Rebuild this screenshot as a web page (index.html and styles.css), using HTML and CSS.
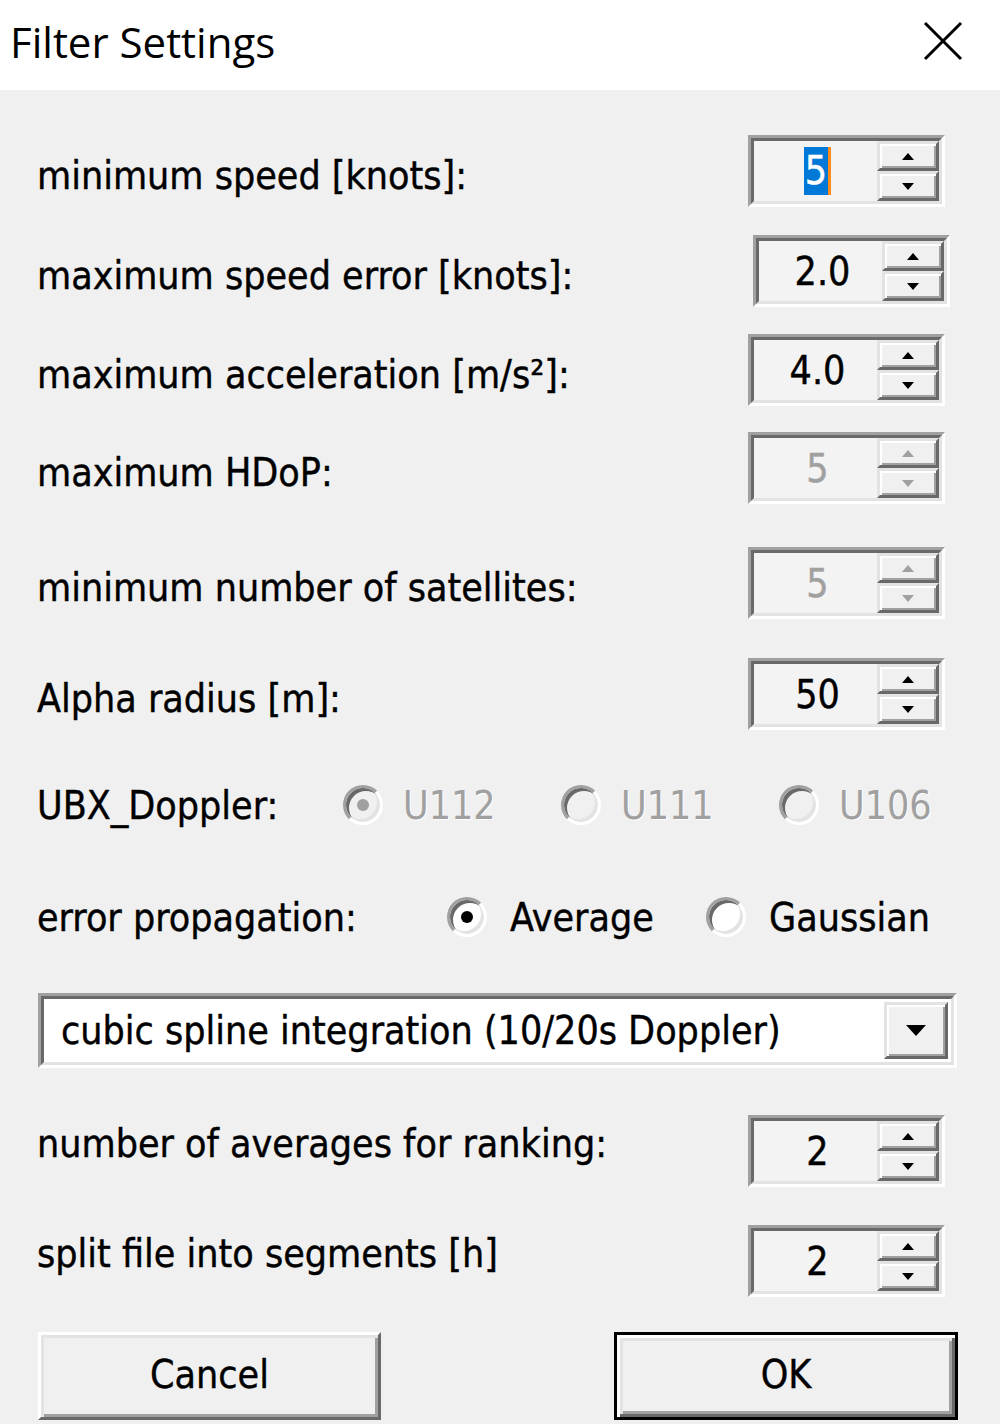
FILE: index.html
```html
<!DOCTYPE html>
<html>
<head>
<meta charset="utf-8">
<title>Filter Settings</title>
<link rel="stylesheet" href="styles.css">
</head>
<body>
<div class="dialog">
  <div class="titlebar">
    <span class="title">Filter Settings</span>
    <svg class="close" width="40" height="40" viewBox="0 0 40 40"><path d="M2 2 L38 38 M38 2 L2 38" stroke="#000" stroke-width="3" fill="none"/></svg>
  </div>
  <div class="content">
    <div class="row r1">
      <span class="label">minimum speed [knots]:</span>
      <div class="spin"><div class="spin-in">
        <div class="field"><span class="sel">5</span></div>
        <div class="btns">
          <div class="sbtn"><svg width="12" height="7" viewBox="0 0 12 7"><polygon points="6,0 12,7 0,7" fill="#000"/></svg></div>
          <div class="sbtn"><svg width="12" height="7" viewBox="0 0 12 7"><polygon points="0,0 12,0 6,7" fill="#000"/></svg></div>
        </div>
      </div></div>
    </div>
    <div class="row r2">
      <span class="label">maximum speed error [knots]:</span>
      <div class="spin shift"><div class="spin-in">
        <div class="field">2.0</div>
        <div class="btns">
          <div class="sbtn"><svg width="12" height="7" viewBox="0 0 12 7"><polygon points="6,0 12,7 0,7" fill="#000"/></svg></div>
          <div class="sbtn"><svg width="12" height="7" viewBox="0 0 12 7"><polygon points="0,0 12,0 6,7" fill="#000"/></svg></div>
        </div>
      </div></div>
    </div>
    <div class="row r3">
      <span class="label">maximum acceleration [m/s²]:</span>
      <div class="spin"><div class="spin-in">
        <div class="field">4.0</div>
        <div class="btns">
          <div class="sbtn"><svg width="12" height="7" viewBox="0 0 12 7"><polygon points="6,0 12,7 0,7" fill="#000"/></svg></div>
          <div class="sbtn"><svg width="12" height="7" viewBox="0 0 12 7"><polygon points="0,0 12,0 6,7" fill="#000"/></svg></div>
        </div>
      </div></div>
    </div>
    <div class="row r4">
      <span class="label">maximum HDoP:</span>
      <div class="spin disabled"><div class="spin-in">
        <div class="field">5</div>
        <div class="btns">
          <div class="sbtn"><svg width="12" height="7" viewBox="0 0 12 7"><polygon points="6,0 12,7 0,7" fill="#a0a0a0"/></svg></div>
          <div class="sbtn"><svg width="12" height="7" viewBox="0 0 12 7"><polygon points="0,0 12,0 6,7" fill="#a0a0a0"/></svg></div>
        </div>
      </div></div>
    </div>
    <div class="row r5">
      <span class="label">minimum number of satellites:</span>
      <div class="spin disabled"><div class="spin-in">
        <div class="field">5</div>
        <div class="btns">
          <div class="sbtn"><svg width="12" height="7" viewBox="0 0 12 7"><polygon points="6,0 12,7 0,7" fill="#a0a0a0"/></svg></div>
          <div class="sbtn"><svg width="12" height="7" viewBox="0 0 12 7"><polygon points="0,0 12,0 6,7" fill="#a0a0a0"/></svg></div>
        </div>
      </div></div>
    </div>
    <div class="row r6">
      <span class="label">Alpha radius [m]:</span>
      <div class="spin"><div class="spin-in">
        <div class="field">50</div>
        <div class="btns">
          <div class="sbtn"><svg width="12" height="7" viewBox="0 0 12 7"><polygon points="6,0 12,7 0,7" fill="#000"/></svg></div>
          <div class="sbtn"><svg width="12" height="7" viewBox="0 0 12 7"><polygon points="0,0 12,0 6,7" fill="#000"/></svg></div>
        </div>
      </div></div>
    </div>
    <div class="row r7">
      <span class="label label-ubx">UBX_Doppler:</span>
      <div class="opt opt-ubx disabled"><span class="radio checked"></span><span class="opt-text">U112</span></div>
      <div class="opt opt-ubx disabled"><span class="radio"></span><span class="opt-text">U111</span></div>
      <div class="opt opt-ubx disabled"><span class="radio"></span><span class="opt-text">U106</span></div>
    </div>
    <div class="row r8">
      <span class="label label-err">error propagation:</span>
      <div class="opt opt-err"><span class="radio checked"></span><span class="opt-text">Average</span></div>
      <div class="opt opt-err"><span class="radio"></span><span class="opt-text">Gaussian</span></div>
    </div>
    <div class="row r-combo">
      <div class="combo"><div class="combo-in">
        <span class="combo-text">cubic spline integration (10/20s Doppler)</span>
        <div class="combo-btn"><svg width="20" height="11" viewBox="0 0 20 11"><polygon points="0,0 20,0 10,11" fill="#000"/></svg></div>
      </div></div>
    </div>
    <div class="row r9">
      <span class="label label-up">number of averages for ranking:</span>
      <div class="spin"><div class="spin-in">
        <div class="field">2</div>
        <div class="btns">
          <div class="sbtn"><svg width="12" height="7" viewBox="0 0 12 7"><polygon points="6,0 12,7 0,7" fill="#000"/></svg></div>
          <div class="sbtn"><svg width="12" height="7" viewBox="0 0 12 7"><polygon points="0,0 12,0 6,7" fill="#000"/></svg></div>
        </div>
      </div></div>
    </div>
    <div class="row r10">
      <span class="label label-up">split file into segments [h]</span>
      <div class="spin"><div class="spin-in">
        <div class="field">2</div>
        <div class="btns">
          <div class="sbtn"><svg width="12" height="7" viewBox="0 0 12 7"><polygon points="6,0 12,7 0,7" fill="#000"/></svg></div>
          <div class="sbtn"><svg width="12" height="7" viewBox="0 0 12 7"><polygon points="0,0 12,0 6,7" fill="#000"/></svg></div>
        </div>
      </div></div>
    </div>
    <div class="row r-buttons">
      <div class="button"><span>Cancel</span></div>
      <div class="button default"><span>OK</span></div>
    </div>
  </div>
</div>
</body>
</html>
```

FILE: styles.css
```css
html, body {
  margin: 0;
  padding: 0;
}
body {
  width: 1000px;
  height: 1424px;
  overflow: hidden;
  background: #f0f0f0;
  font-family: "DejaVu Sans Condensed", "DejaVu Sans", sans-serif;
  font-size: 39px;
  color: #000;
  -webkit-text-stroke: 0.4px currentColor;
}
.titlebar {
  height: 90px;
  background: #fff;
  display: flex;
  align-items: center;
  justify-content: space-between;
  padding: 0 37px 8px 10px;
  box-sizing: border-box;
}
.title {
  font-family: "Open Sans", "Noto Sans", sans-serif;
  font-size: 42px;
  color: #000;
  -webkit-text-stroke: 0;
}
.close {
  display: block;
}
.content {
  display: flex;
  flex-direction: column;
  padding: 0 55px 0 37px;
}
.row {
  display: flex;
  align-items: center;
  height: 72px;
}
.r1 { margin-top: 45px; }
.r2 { margin-top: 28px; }
.r3 { margin-top: 27px; }
.r4 { margin-top: 26px; }
.r5 { margin-top: 43px; }
.r6 { margin-top: 39px; }
.r7 { margin-top: 39px; }
.r8 { margin-top: 40px; }
.r-combo { margin-top: 40px; height: 75px; }
.r9 { margin-top: 47px; }
.r10 { margin-top: 38px; }
.r-buttons { margin-top: 35px; height: 88px; justify-content: space-between; margin-left: 1px; margin-right: -13px; }

.label {
  white-space: nowrap;
  padding-top: 8px;
}
.label-up {
  padding-top: 0;
  padding-bottom: 16px;
}
.label-ubx { width: 306px; flex: none; padding-top: 0; }
.label-err { width: 410px; flex: none; padding-top: 0; }

/* spin box */
.spin {
  margin-left: auto;
  width: 197px;
  height: 72px;
  box-sizing: border-box;
  border: 3px solid;
  border-color: #a0a0a0 #ffffff #ffffff #a0a0a0;
  display: flex;
}
.spin.shift { margin-right: -5px; }
.spin-in {
  flex: 1;
  display: flex;
  border: 3px solid;
  border-color: #696969 #e3e3e3 #e3e3e3 #696969;
  background: #f3f3f3;
}
.field {
  flex: 1;
  display: flex;
  align-items: center;
  justify-content: center;
  padding-left: 4px;
}
.disabled .field { color: #a0a0a0; }
.sel {
  background: #0078d7;
  color: #fff;
  padding: 2px 1px;
  line-height: 44px;
  border-right: 3px solid #ff8c1a;
}
.btns {
  width: 62px;
  display: flex;
  flex-direction: column;
}
.sbtn {
  flex: 1;
  display: flex;
  align-items: center;
  justify-content: center;
  background: #f0f0f0;
  border: 3px solid;
  border-color: #e3e3e3 #696969 #696969 #e3e3e3;
  box-shadow: inset 2px 2px #ffffff, inset -2px -2px #a0a0a0;
}
.sbtn svg { display: block; }

/* radio options */
.opt {
  display: flex;
  align-items: center;
  flex: none;
}
.opt-ubx { width: 218px; }
.opt-err { width: 259px; }
.radio {
  width: 40px;
  height: 40px;
  box-sizing: border-box;
  border-radius: 50%;
  border: 3px solid;
  border-color: #a0a0a0 #ffffff #ffffff #a0a0a0;
  background: #ffffff;
  box-shadow: inset 3px 3px 0 0 #696969, inset -3px -3px 0 0 #e3e3e3;
  display: flex;
  align-items: center;
  justify-content: center;
  flex: none;
}
.radio.checked::after {
  content: "";
  width: 12px;
  height: 12px;
  border-radius: 50%;
  background: #000;
}
.disabled .radio { background: #f0f0f0; }
.disabled .radio.checked::after { background: #a0a0a0; }
.opt-text {
  margin-left: 20px;
  white-space: nowrap;
}
.opt-err .opt-text { margin-left: 23px; }
.disabled .opt-text {
  color: #a0a0a0;
  text-shadow: 1px 1px 0 #fff;
  -webkit-text-stroke: 0;
}

/* combo box */
.combo {
  width: 919px;
  height: 75px;
  box-sizing: border-box;
  margin-left: 1px;
  margin-right: -12px;
  border: 3px solid;
  border-color: #a0a0a0 #ffffff #ffffff #a0a0a0;
  display: flex;
}
.combo-in {
  flex: 1;
  display: flex;
  align-items: center;
  border: 3px solid;
  border-color: #696969 #e3e3e3 #e3e3e3 #696969;
  background: #ffffff;
  padding: 3px;
}
.combo-text {
  flex: 1;
  padding-left: 14px;
  white-space: nowrap;
}
.combo-btn {
  width: 64px;
  align-self: stretch;
  box-sizing: border-box;
  display: flex;
  align-items: center;
  justify-content: center;
  background: #f0f0f0;
  border: 3px solid;
  border-color: #e3e3e3 #696969 #696969 #e3e3e3;
  box-shadow: inset 2px 2px #ffffff, inset -2px -2px #a0a0a0;
}

/* buttons */
.button {
  width: 343px;
  height: 88px;
  box-sizing: border-box;
  display: flex;
  align-items: center;
  justify-content: center;
  background: #f0f0f0;
  border: 3px solid;
  border-color: #ffffff #696969 #696969 #ffffff;
  box-shadow: inset 3px 3px #e3e3e3, inset -3px -3px #a0a0a0;
}
.button span { padding-bottom: 4px; }
.button.default {
  width: 344px;
  border: 3px solid #000;
  box-shadow: inset 3px 3px #ffffff, inset -3px -3px #696969, inset 6px 6px #e3e3e3, inset -6px -6px #a0a0a0;
}
```
